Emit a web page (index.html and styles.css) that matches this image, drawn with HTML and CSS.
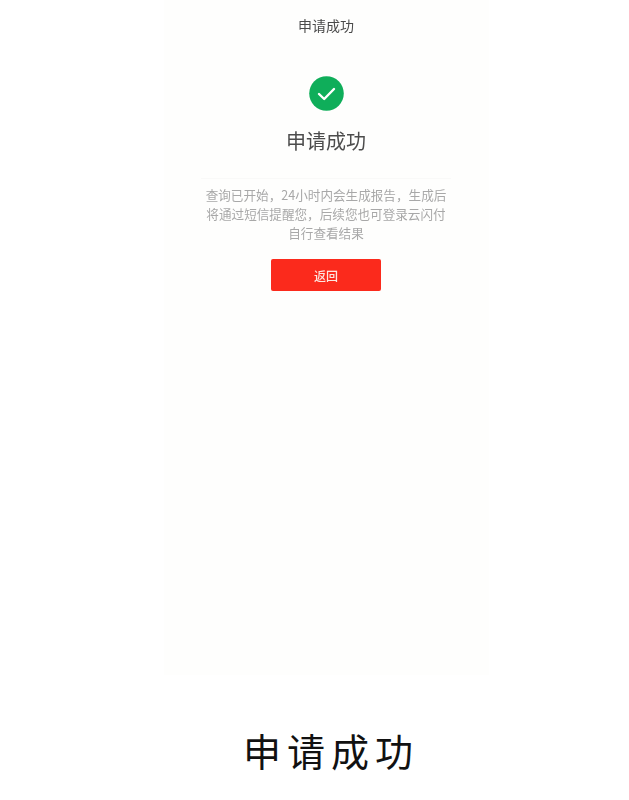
FILE: index.html
```html
<!DOCTYPE html>
<html lang="zh">
<head>
<meta charset="utf-8">
<title>申请成功</title>
<link rel="stylesheet" href="styles.css">
</head>
<body>
<main class="phone">
  <header class="nav">申请成功</header>
  <svg class="status-icon" viewBox="0 0 35 35" aria-hidden="true">
    <circle cx="17.5" cy="17.5" r="17.3" fill="#0fae5a"/>
    <path d="M10 18l5.2 5L25 13" fill="none" stroke="#fff" stroke-width="2.4" stroke-linecap="round" stroke-linejoin="round"/>
  </svg>
  <h1 class="heading">申请成功</h1>
  <div class="divider"></div>
  <p class="message">查询已开始，24小时内会生成报告，生成后<br>将通过短信提醒您，后续您也可登录云闪付<br>自行查看结果</p>
  <button class="back" type="button">返回</button>
</main>
<footer class="caption">申请成功</footer>
</body>
</html>
```
FILE: styles.css
```css
html, body {
  margin: 0;
  padding: 0;
  background: #fff;
}
body {
  width: 629px;
  height: 800px;
  overflow: hidden;
  font-family: "Noto Sans CJK SC", "Noto Sans", sans-serif;
}
.phone {
  width: 325px;
  height: 675px;
  margin-left: 163.5px;
  background: #fefefd;
  display: flex;
  flex-direction: column;
  align-items: center;
}
.nav {
  margin-top: 15px;
  height: 20px;
  line-height: 20px;
  font-size: 14px;
  color: #4a4a4a;
  filter: blur(0.5px);
}
.status-icon {
  display: block;
  width: 35px;
  height: 35px;
  margin-top: 41px;
  filter: blur(0.3px);
}
.heading {
  margin: 15px 0 0;
  height: 30px;
  line-height: 30px;
  font-size: 20px;
  font-weight: 400;
  color: #4c4c4c;
  filter: blur(0.5px);
}
.divider {
  width: 250px;
  height: 1px;
  margin-top: 22px;
  background: #f9f9f8;
}
.message {
  margin: 6px 0 0;
  font-size: 12.6px;
  line-height: 19px;
  text-align: center;
  color: #a8a8a8;
  white-space: nowrap;
  filter: blur(0.5px);
}
.back {
  width: 110px;
  height: 32px;
  margin-top: 17px;
  padding: 0;
  border: 0;
  border-radius: 2px;
  background: #fb2a1c;
  color: #fde6e0;
  font-family: inherit;
  font-size: 12px;
  font-weight: 500;
  filter: blur(0.4px);
}
.caption {
  margin-top: 47px;
  margin-left: 243px;
  height: 56px;
  line-height: 56px;
  font-size: 38px;
  letter-spacing: 6px;
  color: #111;
  font-weight: 400;
  white-space: nowrap;
}
```
